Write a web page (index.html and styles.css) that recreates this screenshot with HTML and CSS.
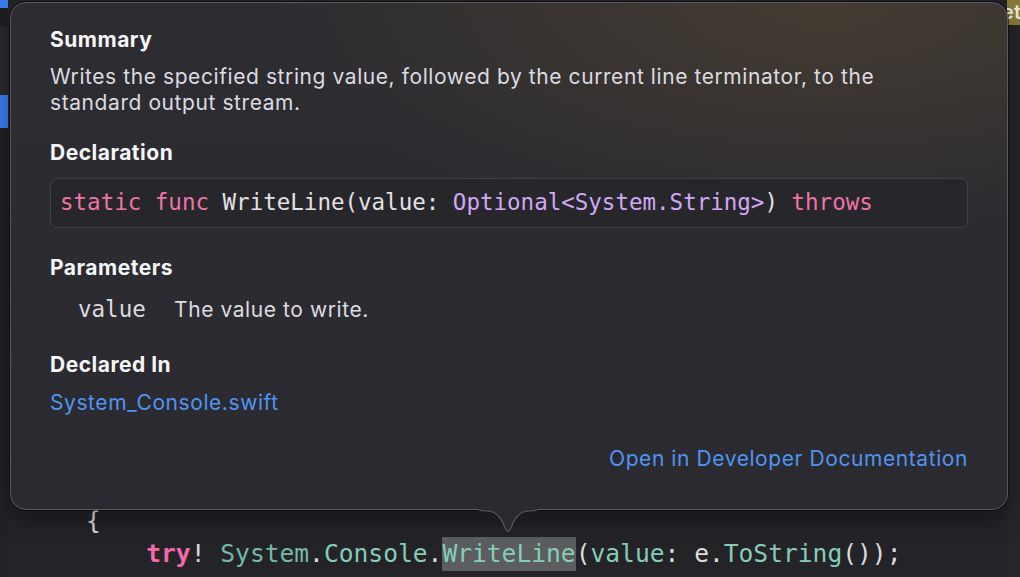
FILE: index.html
```html
<!DOCTYPE html>
<html>
<head>
<meta charset="utf-8">
<link rel="stylesheet" href="styles.css">
</head>
<body>
<div class="screen">
  <div class="side-left">
    <div class="blk blue top"></div>
    <div class="blk dark1"></div>
    <div class="blk mid"></div>
    <div class="blk blue low"></div>
  </div>
  <div class="editor">
    <div class="line first"><span class="punc">{</span></div>
    <div class="line indent"><span class="kw">try</span><span class="punc">!</span> <span class="ty">System</span><span class="punc">.</span><span class="ty2">Console</span><span class="punc">.</span><span class="hl ty2">WriteLine</span><span class="punc">(</span><span class="ty2">value</span><span class="punc">: e.</span><span class="ty2">ToString</span><span class="punc">());</span></div>
  </div>
  <div class="side-right">
    <div class="olive"><span>et</span></div>
  </div>

  <div class="popover">
    <h2 class="head">Summary</h2>
    <p class="body">Writes the specified string value, followed by the current line terminator, to the<br>standard output stream.</p>
    <h2 class="head gap-l">Declaration</h2>
    <div class="decl"><span class="pk">static</span> <span class="pk">func</span> <span class="pn">WriteLine(value:</span> <span class="pt">Optional&lt;System.String&gt;</span><span class="pn">)</span> <span class="pk">throws</span></div>
    <h2 class="head gap-p">Parameters</h2>
    <div class="param"><span class="pname">value</span><span class="pdesc">The value to write.</span></div>
    <h2 class="head gap-d">Declared In</h2>
    <div class="link">System_Console.swift</div>
    <div class="open"><span class="link">Open in Developer Documentation</span></div>
    <svg class="arrow" width="58" height="27" viewBox="0 0 58 27">
      <path d="M0 0 L0 1.5 C13 1.5 17 3 22.5 11 L27 20.5 Q29 24.5 31 20.5 L35.5 11 C41 3 45 1.5 58 1.5 L58 0 Z" fill="#2b2a30"/>
      <path d="M0 1.5 C13 1.5 17 3 22.5 11 L27 20.5 Q29 24.5 31 20.5 L35.5 11 C41 3 45 1.5 58 1.5" fill="none" stroke="#5a595e" stroke-width="1.2"/>
    </svg>
  </div>
</div>
</body>
</html>
```

FILE: styles.css
```css
* { box-sizing: border-box; }
html, body { margin: 0; padding: 0; }
body { background: #232328; overflow: hidden; }

.screen {
  position: relative;
  width: 1020px;
  height: 577px;
  display: grid;
  grid-template-columns: 8px 1fr 13px;
  background: #232328;
}

.side-left { display: flex; flex-direction: column; background: #212126; }
.blk { width: 8px; }
.blk.blue { background: #3a7bf0; }
.blk.top { height: 8px; }
.blk.dark1 { height: 19px; background: #1f1f23; }
.blk.mid { height: 68px; background: #2a2a2e; }
.blk.low { height: 33px; }

.side-right { display: flex; flex-direction: column; background: #25252a; overflow: hidden; }
.olive {
  height: 25px;
  background: #877a3a;
  display: flex;
  justify-content: flex-end;
  overflow: hidden;
}
.olive span {
  font-family: Inter, sans-serif;
  font-size: 20px;
  font-weight: 600;
  color: #efe9d6;
  line-height: 25px;
  margin-right: -1px;
  white-space: nowrap;
}

.editor {
  padding-top: 504px;
  padding-left: 79px;
  font-family: "DejaVu Sans Mono", monospace;
  font-size: 24.6px;
  color: #dcdcdc;
}
.line { height: 33px; line-height: 33px; white-space: pre; }
.line.first { margin-left: -1px; }
.line.indent { padding-left: 4ch; }
.kw { color: #f06aa9; font-weight: bold; }
.punc { color: #dcdcdc; }
.ty { color: #75b9a8; }
.ty2 { color: #86cdb9; }
.hl { background: #5c5d5e; display: inline-block; height: 34px; }

.popover {
  position: absolute;
  left: 10px;
  top: 2px;
  width: 998px;
  height: 508px;
  border: 1px solid #5a595e;
  border-radius: 16px;
  box-shadow: 0 0 0 1px rgba(0,0,0,0.45), 0 10px 24px rgba(0,0,0,0.35);
  background:
    radial-gradient(ellipse 560px 230px at 82% 0%, rgba(105, 85, 50, 0.38), rgba(105,85,50,0) 100%),
    linear-gradient(180deg, #2d2c31 0%, #2b2a30 100%);
  padding: 24px 39px 0 39px;
  font-family: Inter, "Open Sans", sans-serif;
  color: #dedde2;
  letter-spacing: 0.58px;
}

.head {
  margin: 0;
  font-size: 21px;
  line-height: 26px;
  font-weight: 700;
  color: #f6f6f8;
  letter-spacing: 0.5px;
}
.body {
  margin: 11px 0 0 0;
  font-size: 21px;
  line-height: 26px;
  color: #dcdbe0;
  white-space: nowrap;
}
.gap-l { margin-top: 24px; }
.gap-p { margin-top: 27px; }
.gap-d { margin-top: 30px; }

.decl {
  margin-top: 12px;
  height: 50px;
  border: 1.5px solid #414046;
  border-radius: 7px;
  background: #27262b;
  padding-left: 9px;
  font-family: "DejaVu Sans Mono", monospace;
  font-size: 22.5px;
  line-height: 47px;
  letter-spacing: 0;
  white-space: pre;
  color: #e2e2e4;
}
.pk { color: #ee74a8; }
.pn { color: #e2e2e4; }
.pt { color: #cfa9f5; }

.param {
  margin-top: 15px;
  height: 26px;
  line-height: 26px;
  padding-left: 28px;
  display: flex;
  align-items: baseline;
}
.pname {
  font-family: "DejaVu Sans Mono", monospace;
  font-size: 22.5px;
  letter-spacing: 0;
  color: #dcdce0;
  width: 96px;
}
.pdesc { font-size: 21px; color: #dcdbe0; }

.link {
  margin-top: 12px;
  font-size: 21px;
  line-height: 26px;
  color: #4f95ef;
}
.open {
  margin-top: 30px;
  display: flex;
  justify-content: flex-end;
}
.open .link { margin-top: 0; }

.arrow {
  position: absolute;
  left: 468px;
  top: calc(100% - 0.5px);
}
```
